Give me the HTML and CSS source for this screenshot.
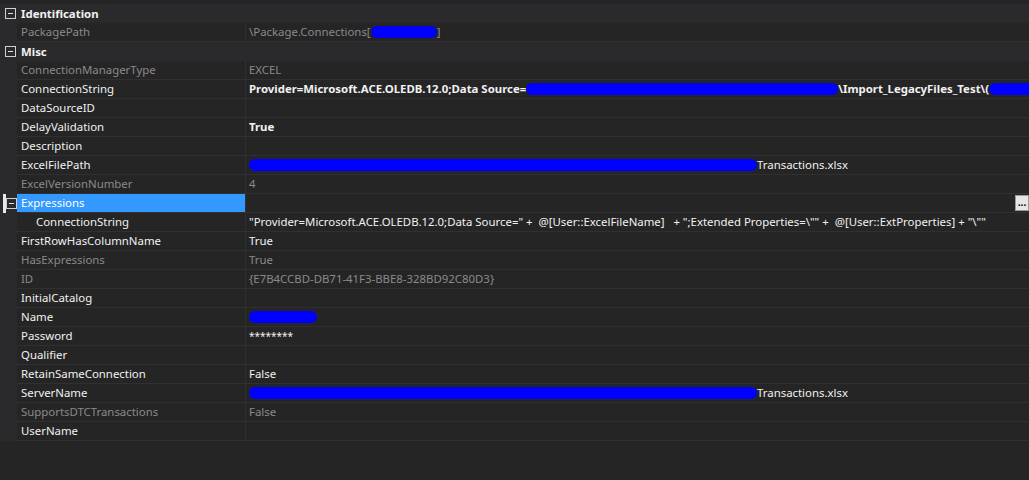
FILE: index.html
```html
<!DOCTYPE html>
<html lang="en">
<head>
    <meta charset="UTF-8">
    <title>Properties</title>
    <link rel="stylesheet" href="styles.css">
</head>
<body>
    <div class="grid">
        <div class="category">
            <span class="toggle"></span>
            <span class="catName">Identification</span>
        </div>
        <div class="prop readonly">
            <span class="gutter"></span>
            <span class="name">PackagePath</span>
            <span class="value">\Package.Connections[<span class="scribble" style="width:66px"></span>]</span>
        </div>

        <div class="category">
            <span class="toggle"></span>
            <span class="catName">Misc</span>
        </div>
        <div class="prop readonly">
            <span class="gutter"></span>
            <span class="name">ConnectionManagerType</span>
            <span class="value">EXCEL</span>
        </div>
        <div class="prop">
            <span class="gutter"></span>
            <span class="name">ConnectionString</span>
            <span class="value bold">Provider=Microsoft.ACE.OLEDB.12.0;Data Source=<span class="scribble" style="width:312px"></span>\Import_LegacyFiles_Test\(<span class="scribble" style="width:60px"></span></span>
        </div>
        <div class="prop">
            <span class="gutter"></span>
            <span class="name">DataSourceID</span>
            <span class="value"></span>
        </div>
        <div class="prop">
            <span class="gutter"></span>
            <span class="name">DelayValidation</span>
            <span class="value bold">True</span>
        </div>
        <div class="prop">
            <span class="gutter"></span>
            <span class="name">Description</span>
            <span class="value"></span>
        </div>
        <div class="prop">
            <span class="gutter"></span>
            <span class="name">ExcelFilePath</span>
            <span class="value"><span class="scribble" style="width:508px"></span>Transactions.xlsx</span>
        </div>
        <div class="prop readonly">
            <span class="gutter"></span>
            <span class="name">ExcelVersionNumber</span>
            <span class="value">4</span>
        </div>
        <div class="prop selected">
            <span class="gutter"><span class="focusBar"></span><span class="toggle"></span></span>
            <span class="name">Expressions</span>
            <span class="value"><span class="dots">...</span></span>
        </div>
        <div class="prop sub">
            <span class="gutter"></span>
            <span class="name">ConnectionString</span>
            <span class="value">"Provider=Microsoft.ACE.OLEDB.12.0;Data Source=" +&nbsp; @[User::ExcelFileName] &nbsp; + ";Extended Properties=\"" +&nbsp; @[User::ExtProperties] + "\""</span>
        </div>
        <div class="prop">
            <span class="gutter"></span>
            <span class="name">FirstRowHasColumnName</span>
            <span class="value">True</span>
        </div>
        <div class="prop readonly">
            <span class="gutter"></span>
            <span class="name">HasExpressions</span>
            <span class="value">True</span>
        </div>
        <div class="prop readonly">
            <span class="gutter"></span>
            <span class="name">ID</span>
            <span class="value">{E7B4CCBD-DB71-41F3-BBE8-328BD92C80D3}</span>
        </div>
        <div class="prop">
            <span class="gutter"></span>
            <span class="name">InitialCatalog</span>
            <span class="value"></span>
        </div>
        <div class="prop">
            <span class="gutter"></span>
            <span class="name">Name</span>
            <span class="value"><span class="scribble" style="width:68px"></span></span>
        </div>
        <div class="prop">
            <span class="gutter"></span>
            <span class="name">Password</span>
            <span class="value stars">********</span>
        </div>
        <div class="prop">
            <span class="gutter"></span>
            <span class="name">Qualifier</span>
            <span class="value"></span>
        </div>
        <div class="prop">
            <span class="gutter"></span>
            <span class="name">RetainSameConnection</span>
            <span class="value">False</span>
        </div>
        <div class="prop">
            <span class="gutter"></span>
            <span class="name">ServerName</span>
            <span class="value"><span class="scribble" style="width:508px"></span>Transactions.xlsx</span>
        </div>
        <div class="prop readonly">
            <span class="gutter"></span>
            <span class="name">SupportsDTCTransactions</span>
            <span class="value">False</span>
        </div>
        <div class="prop">
            <span class="gutter"></span>
            <span class="name">UserName</span>
            <span class="value"></span>
        </div>
    </div>
</body>
</html>
```

FILE: styles.css
```css
body {
    margin: 0;
    background-color: #252526;
    color: #f1f1f1;
    font-family: "Noto Sans", "Open Sans", sans-serif;
    font-size: 11.4px;
    height: 480px;
    overflow: hidden;
}

.grid {
    padding-top: 4px;
}

.category {
    display: flex;
    align-items: center;
    height: 19px;
    background-color: #2a2a2c;
}

.catName {
    font-weight: bold;
    padding-left: 5px;
}

.toggle {
    position: relative;
    width: 9px;
    height: 9px;
    border: 1px solid #d0d0d0;
    margin-left: 5px;
    flex: none;
}

.toggle::after {
    content: "";
    position: absolute;
    left: 2px;
    top: 4px;
    width: 5px;
    height: 1px;
    background-color: #e0e0e0;
}

.prop {
    display: grid;
    grid-template-columns: 17px 229px 1fr;
    height: 19px;
}

.gutter {
    position: relative;
    display: flex;
    align-items: center;
    background-color: #2a2a2c;
}

.gutter .toggle {
    margin-left: 5px;
}

.name,
.value {
    display: flex;
    align-items: center;
    white-space: nowrap;
    overflow: hidden;
    border-bottom: 1px solid #303033;
    line-height: 18px;
}

.name {
    padding-left: 4px;
    border-right: 1px solid #303033;
}

.value {
    position: relative;
    padding-left: 3px;
}

.readonly .name,
.readonly .value {
    color: #8a8a8a;
}

.bold {
    font-weight: bold;
}

.sub .name {
    padding-left: 19px;
}

.selected .name {
    background-color: #3399ff;
    color: #fff;
}

.focusBar {
    position: absolute;
    left: 3px;
    top: 0;
    width: 3px;
    height: 19px;
    background-color: #e8e8e8;
}

.selected .toggle {
    margin-left: 6px;
}

.dots {
    position: absolute;
    right: 0;
    top: 1px;
    width: 12px;
    height: 14px;
    background-color: #e6e6e6;
    border: 1px solid #9a9a9a;
    color: #000;
    font-size: 10px;
    line-height: 12px;
    text-align: center;
    font-weight: bold;
}

.scribble {
    display: inline-block;
    height: 12px;
    background-color: #0000ff;
    border-radius: 6px;
    flex: none;
}

.stars {
    font-size: 10px;
}
```
